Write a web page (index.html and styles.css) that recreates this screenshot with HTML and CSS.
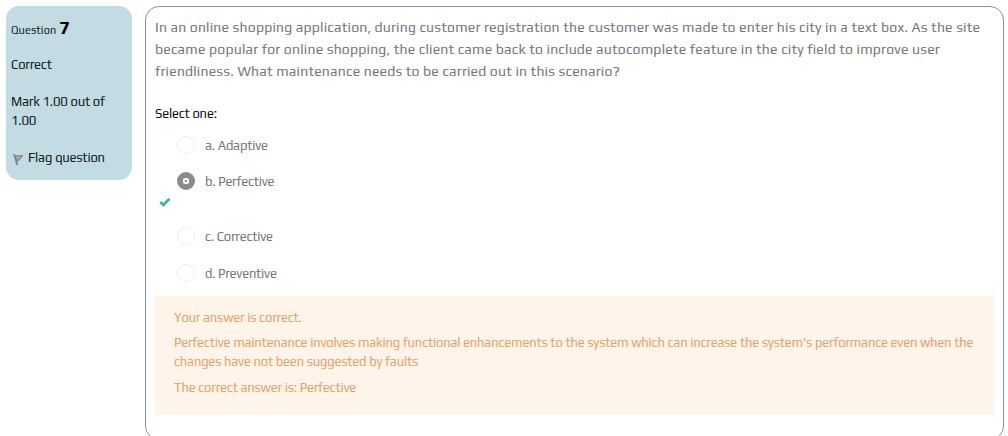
FILE: index.html
```html
<!DOCTYPE html>
<html lang="en">
<head>
<meta charset="utf-8">
<title>Question 7</title>
<link rel="stylesheet" href="styles.css">
</head>
<body>
<main class="question">
  <aside class="info">
    <h3 class="number"><span class="number-label">Question</span> <b class="number-value">7</b></h3>
    <div class="state">Correct</div>
    <div class="grade">Mark 1.00 out of<br>1.00</div>
    <div class="flag">
      <svg class="flag-icon" viewBox="0 0 11 13"><path d="M1.2 1.5 4.3 12" fill="none" stroke="#7f8588" stroke-width="1.8"/><path d="M1.5 2.5C4 4 6 1.5 9.5 3L4.5 8Z" fill="#a9b4b9" stroke="#7f8588" stroke-width="1.3"/></svg>
      <span>Flag question</span>
    </div>
  </aside>
  <section class="content">
    <p class="prompt">In an online shopping application, during customer registration the customer was made to enter his city in a text box. As the site<br>became popular for online shopping, the client came back to include autocomplete feature in the city field to improve user<br>friendliness. What maintenance needs to be carried out in this scenario?</p>
    <div class="select">Select one:</div>
    <div class="answers">
      <div class="option"><i class="radio"></i><span>a. Adaptive</span></div>
      <div class="option"><i class="radio checked"></i><span>b. Perfective</span></div>
      <svg class="tick" viewBox="0 0 12 10"><path d="M1.3 5 4.4 8 10.5 1.8" fill="none" stroke="#43b58a" stroke-width="2.8"/></svg>
      <div class="option"><i class="radio"></i><span>c. Corrective</span></div>
      <div class="option last"><i class="radio"></i><span>d. Preventive</span></div>
    </div>
    <div class="feedback">
      <p>Your answer is correct.</p>
      <p>Perfective maintenance involves making functional enhancements to the system which can increase the system's performance even when the<br>changes have not been suggested by faults</p>
      <p>The correct answer is: Perfective</p>
    </div>
  </section>
</main>
</body>
</html>
```
FILE: styles.css
```css
*, *::after { box-sizing: border-box; }
body { margin: 0; height: 436px; overflow: hidden; background: #fff; font: 13px/19px Play, Roboto, "Open Sans", sans-serif; letter-spacing: -0.19px; color: #111b20; white-space: nowrap; }
p, h3 { margin: 0; font-weight: 400; }
.question { display: flex; align-items: flex-start; gap: 13px; padding: 6px 4px 0 6px; }
.info { width: 126px; height: 174px; padding: 12px 5px 0; border-radius: 13px; background: #c3dbe3; letter-spacing: -0.19px; }
.number { display: flex; align-items: baseline; gap: 3px; height: 20px; line-height: 20px; }
.number-label { font-size: 11px; letter-spacing: 0.1px; }
.number-value { font-size: 18px; color: #000; }
.state { margin-top: 17px; }
.grade { margin-top: 18px; }
.flag { display: flex; align-items: center; margin-top: 18px; }
.flag-icon { width: 11px; height: 13px; margin: 4px 4px 0 2px; }
.content { width: 859px; height: 434px; padding: 9px 9px 0; border: 1px solid #88949a; border-radius: 14px; color: #777; }
.prompt { font-size: 14px; line-height: 22px; letter-spacing: 0.177px; }
.select { margin-top: 22px; color: #111; }
.answers { display: flex; flex-direction: column; padding-top: 13px; }
.option { display: flex; align-items: center; gap: 10px; height: 19px; margin: 0 0 17px 22px; letter-spacing: -0.22px; }
.option.last { margin: 1px 0 0 22px; }
.radio { width: 18px; height: 18px; margin-top: -1px; border: 1px solid #eee; border-radius: 50%; background: #fff; }
.radio.checked { display: flex; align-items: center; justify-content: center; border: 0; background: #8b8b8b; }
.radio.checked::after { content: ""; width: 6px; height: 6px; border: 2px solid #fff; border-radius: 2px; background: #8b8b8b; }
.tick { width: 12px; height: 10px; margin: -11px 0 20px 4px; }
.feedback { height: 119px; margin-top: 13px; padding: 12px 19px; background: #fff4ea; color: #e2a36b; }
.feedback p { margin-bottom: 6px; }
.feedback p:last-child { margin: 7px 0 0; }
```
